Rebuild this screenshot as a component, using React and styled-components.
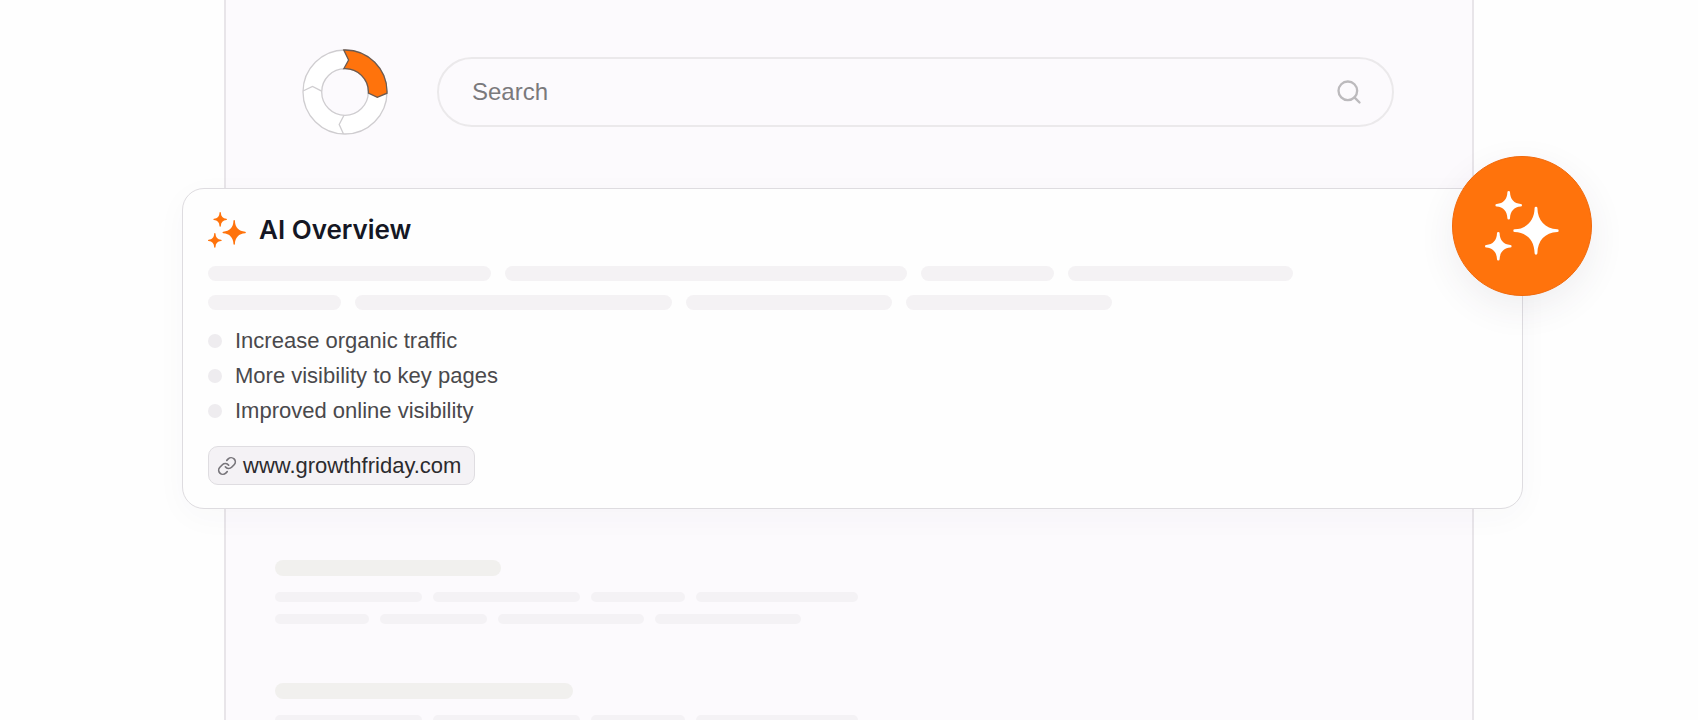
import React, { useState } from "react";
import styled, { createGlobalStyle } from "styled-components";
import { Link, Search } from "lucide-react";

const GlobalStyle = createGlobalStyle`
  * {
    box-sizing: border-box;
  }
  body {
    margin: 0;
    background: #fefefe;
    font-family: "Liberation Sans", Arial, sans-serif;
  }
`;

const Page = styled.main`
  display: flex;
  height: 100vh;
  padding: 0 224px;
  overflow: hidden;
`;

const Panel = styled.div`
  flex: 1;
  min-width: 0;
  height: max-content;
  min-height: 100%;
  border: 2px solid #e8e5e9;
  border-width: 0 2px;
  background: #fcfafd;
`;

const Header = styled.header`
  display: flex;
  align-items: center;
  gap: 49px;
  padding: 49px 78px 53px 76px;
`;

const LogoMark = styled.svg`
  flex: none;
  width: 86px;
  height: 86px;
`;

const SearchBar = styled.form`
  flex: 1;
  display: flex;
  align-items: center;
  height: 70px;
  min-width: 0;
  padding: 0 29px 0 33px;
  border: 2px solid #ebe9eb;
  border-radius: 35px;
`;

const SearchInput = styled.input`
  flex: 1;
  min-width: 0;
  padding: 0;
  border: none;
  outline: none;
  background: transparent;
  color: #545256;
  font-family: inherit;
  font-size: 24px;
  line-height: 32px;
  &::placeholder {
    color: #7a797c;
    opacity: 1;
  }
`;

const SearchButton = styled.button`
  display: flex;
  padding: 0;
  border: none;
  background: transparent;
  color: #bcbabd;
  cursor: pointer;
`;

const OverviewCard = styled.section`
  position: relative;
  margin: 0 -51px 0 -44px;
  padding: 23px 25px 23px;
  border: 1px solid #dedce0;
  border-radius: 22px;
  background: #fefefe;
  box-shadow: 0 8px 32px rgba(60, 50, 80, 0.03);
`;

const Badge = styled.div`
  position: absolute;
  top: -33px;
  right: -70px;
  display: flex;
  align-items: center;
  justify-content: center;
  width: 140px;
  height: 140px;
  border: 1px solid #f16a0c;
  border-radius: 50%;
  background: #ff730c;
  color: #fff;
  box-shadow: 0 12px 36px rgba(60, 50, 80, 0.08);
`;

const CardHeader = styled.div`
  display: flex;
  align-items: center;
  gap: 13px;
  height: 36px;
  margin-bottom: 18px;
  color: #ff730c;
`;

const Title = styled.h2`
  margin: 0;
  color: #151724;
  font-family: Inter, sans-serif;
  font-size: 26px;
  font-weight: 600;
  line-height: 36px;
`;

const Lines = styled.div`
  display: flex;
  flex-direction: column;
  gap: ${(props) => props.$gap}px;
`;

const Line = styled.div`
  display: flex;
  gap: ${(props) => props.$gap}px;
`;

const Bar = styled.div`
  width: ${(props) => props.$width}px;
  height: ${(props) => props.$height}px;
  border-radius: 8px;
  background: ${(props) => props.$color || "#f4f2f4"};
`;

const Benefits = styled.ul`
  margin: 13px 0 18px;
  padding: 0;
  list-style: none;
`;

const Benefit = styled.li`
  display: flex;
  align-items: center;
  gap: 13px;
  color: #4a494c;
  font-size: 22px;
  line-height: 35px;
  &::before {
    content: "";
    width: 14px;
    height: 14px;
    border-radius: 50%;
    background: #eeecef;
  }
`;

const SourceLink = styled.a`
  display: flex;
  align-items: center;
  gap: 6px;
  width: fit-content;
  height: 39px;
  padding: 0 13px 0 8px;
  border: 1px solid #dfdde1;
  border-radius: 10px;
  background: #f4f2f5;
  color: #2c2b2e;
  font-size: 22px;
  text-decoration: none;
  svg {
    color: #77757a;
  }
`;

const Results = styled.div`
  display: flex;
  flex-direction: column;
  gap: 59px;
  padding: 51px 49px;
`;

const Result = styled.article`
  display: flex;
  flex-direction: column;
  gap: 16px;
`;

const overviewLines = [
  [283, 402, 133, 225],
  [133, 317, 206, 206],
];

const resultLines = [
  [147, 147, 94, 162],
  [94, 107, 146, 146],
];

const benefits = [
  "Increase organic traffic",
  "More visibility to key pages",
  "Improved online visibility",
];

function SkeletonLines({ lines, height, gap, lineGap, color }) {
  return (
    <Lines $gap={lineGap}>
      {lines.map((line, index) => (
        <Line $gap={gap} key={index}>
          {line.map((width, i) => (
            <Bar $width={width} $height={height} $color={color} key={i} />
          ))}
        </Line>
      ))}
    </Lines>
  );
}

function Logo() {
  return (
    <LogoMark viewBox="-43 -43 86 86" role="img" aria-label="Growth Friday">
      <circle r="42" fill="#fff" stroke="#cfcdd0" strokeWidth="1.3" />
      <circle r="23.3" fill="#fcfafd" stroke="#cfcdd0" strokeWidth="1.3" />
      <path
        d="M-1.5 42L-5.8 32.5L-1 23.3M-42-1L-32.5-5.5L-23.3-.8"
        fill="none"
        stroke="#cfcdd0"
        strokeWidth="1.3"
      />
      <path
        d="M-1.2-42A42 42 0 0 1 42 1.2L32.3 5.4L23.4 1A23.3 23.3 0 0 0-1.2-23.3L3.6-32Z"
        fill="#ff730c"
        stroke="#6b5a50"
        strokeWidth="1.3"
      />
    </LogoMark>
  );
}

function Sparkles({ width, height }) {
  return (
    <svg width={width} height={height} viewBox="0 0 74 70" fill="currentColor" aria-hidden="true">
      <defs>
        <path
          id="spark-large"
          d="M-1.4-22.6A1.4 1.4 0 0 1 1.4-22.6C1.6-10 9-2 21.3-1.4A1.4 1.4 0 0 1 21.3 1.4C9 2 1.6 10 1.4 22.6A1.4 1.4 0 0 1-1.4 22.6C-1.6 10-9 2-21.3 1.4A1.4 1.4 0 0 1-21.3-1.4C-9-2-1.6-10-1.4-22.6Z"
        />
        <path
          id="spark-small"
          d="M-1.3-13A1.3 1.3 0 0 1 1.3-13C1.5-6 5.5-1.8 12-1.3A1.3 1.3 0 0 1 12 1.3C5.5 1.8 1.5 6 1.3 13A1.3 1.3 0 0 1-1.3 13C-1.5 6-5.5 1.8-12 1.3A1.3 1.3 0 0 1-12-1.3C-5.5-1.8-1.5-6-1.3-13Z"
        />
      </defs>
      <use href="#spark-large" x="51" y="39.7" />
      <use href="#spark-small" x="23.7" y="14.3" />
      <use href="#spark-small" x="13.3" y="55.3" />
    </svg>
  );
}

export default function App() {
  const [query, setQuery] = useState("");
  return (
    <>
      <GlobalStyle />
      <Page>
        <Panel>
          <Header>
            <Logo />
            <SearchBar role="search" onSubmit={(event) => event.preventDefault()}>
              <SearchInput
                aria-label="Search"
                placeholder="Search"
                value={query}
                onChange={(event) => setQuery(event.target.value)}
              />
              <SearchButton type="submit" aria-label="Submit search">
                <Search size={28} strokeWidth={2} />
              </SearchButton>
            </SearchBar>
          </Header>
          <OverviewCard>
            <CardHeader>
              <Sparkles width={38} height={36} />
              <Title>AI Overview</Title>
            </CardHeader>
            <SkeletonLines lines={overviewLines} height={15} gap={14} lineGap={14} />
            <Benefits>
              {benefits.map((benefit) => (
                <Benefit key={benefit}>{benefit}</Benefit>
              ))}
            </Benefits>
            <SourceLink href="https://www.growthfriday.com">
              <Link size={20} strokeWidth={2} />
              www.growthfriday.com
            </SourceLink>
            <Badge>
              <Sparkles width={74} height={70} />
            </Badge>
          </OverviewCard>
          <Results>
            {[226, 298].map((width) => (
              <Result key={width}>
                <Bar $width={width} $height={16} $color="#f1f0ee" />
                <SkeletonLines lines={resultLines} height={10} gap={11} lineGap={12} color="#f4f2f5" />
              </Result>
            ))}
          </Results>
        </Panel>
      </Page>
    </>
  );
}
